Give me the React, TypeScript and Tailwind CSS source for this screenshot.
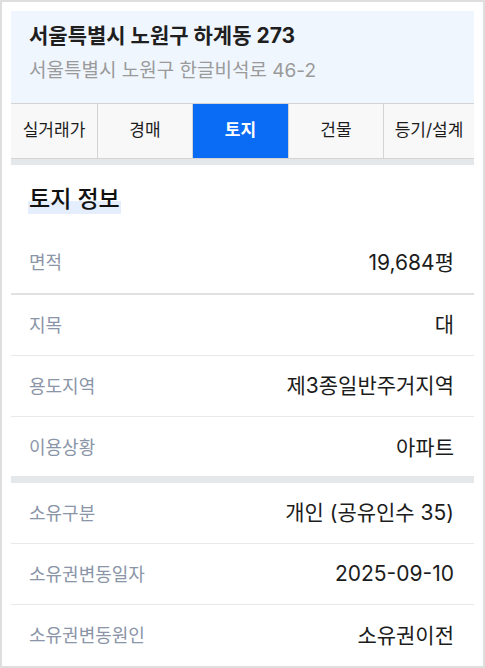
const tabs = [
  { label: '실거래가', w: 'w-[87px]' },
  { label: '경매', w: 'w-[95px]' },
  { label: '토지', w: 'w-[96px]', active: true },
  { label: '건물', w: 'w-[95px]' },
  { label: '등기/설계', w: 'w-[90px]' },
]

const landRows = [
  { label: '면적', value: '19,684평' },
  { label: '지목', value: '대' },
  { label: '용도지역', value: '제3종일반주거지역' },
  { label: '이용상황', value: '아파트' },
]

const ownerRows = [
  { label: '소유구분', value: '개인 (공유인수 35)' },
  { label: '소유권변동일자', value: '2025-09-10' },
  { label: '소유권변동원인', value: '소유권이전' },
]

function Row({ label, value, border }: { label: string; value: string; border?: string }) {
  return (
    <div className={`flex h-[61px] items-center justify-between pl-[18px] pr-[20px] ${border ?? ''}`}>
      <span className="text-[18px] text-[#8b95a8]">{label}</span>
      <span className="text-[21px] text-[#1c1c1c]">{value}</span>
    </div>
  )
}

export default function App() {
  return (
    <div
      className="h-[668px] w-[485px] overflow-hidden border-2 border-[#dedede] bg-white px-[9px] pt-[9px]"
      style={{ fontFamily: 'Inter, "Noto Sans CJK KR", sans-serif' }}
    >
      <div className="flex h-[92px] flex-col gap-[15px] bg-[#f0f6fe] px-[18px] pt-[14px]">
        <h1 className="text-[21px] font-bold leading-none text-[#1f1f1f]">서울특별시 노원구 하계동 273</h1>
        <p className="text-[19px] leading-none text-[#9a9a9a]">서울특별시 노원구 한글비석로 46-2</p>
      </div>

      <div className="flex h-[56px] border-y border-[#d4d4d4] bg-[#f8f8f8]">
        {tabs.map((t, i) => (
          <div
            key={t.label}
            className={`flex ${t.w} items-center justify-center text-[17px] ${
              i < tabs.length - 1 ? 'border-r border-[#d4d4d4]' : ''
            } ${t.active ? 'bg-[#0a6bf5] font-bold text-white' : 'text-[#1c1c1c]'}`}
          >
            {t.label}
          </div>
        ))}
      </div>

      <div className="h-[6px] bg-[#e5e8eb]" />

      <div className="flex h-[67px] items-center pl-[17px]">
        <h2 className="bg-[linear-gradient(transparent_58%,#e4eefc_58%)] px-px text-[23px] font-medium leading-[30px] text-[#111]">
          토지 정보
        </h2>
      </div>

      <Row {...landRows[0]} />
      <div className="h-[2px] bg-[#e1e1e1]" />
      <Row {...landRows[1]} border="border-b border-[#e8e8e8]" />
      <Row {...landRows[2]} border="border-b border-[#e8e8e8]" />
      <Row {...landRows[3]} />

      <div className="mt-[-2px] h-[7px] bg-[#e5e8eb]" />

      <Row {...ownerRows[0]} border="border-b border-[#e8e8e8]" />
      <Row {...ownerRows[1]} border="border-b border-[#e8e8e8]" />
      <Row {...ownerRows[2]} />
    </div>
  )
}
